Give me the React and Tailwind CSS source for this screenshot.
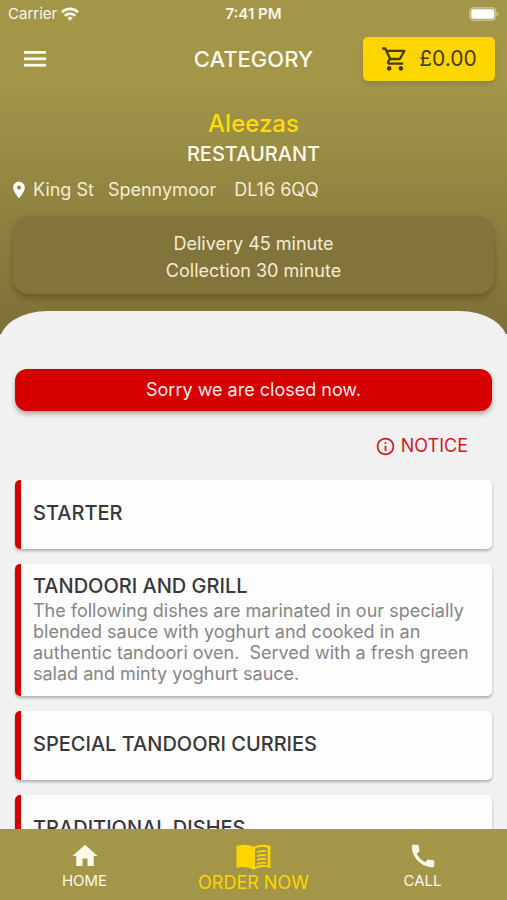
import React from "react";
import {
  MdOutlineShoppingCart,
  MdLocationOn,
  MdInfoOutline,
  MdHome,
  MdCall,
} from "react-icons/md";

const categories = [
  { name: "STARTER" },
  {
    name: "TANDOORI AND GRILL",
    description:
      "The following dishes are marinated in our specially blended sauce with yoghurt and cooked in an authentic tandoori oven.\u00a0 Served with a fresh green salad and minty yoghurt sauce.",
  },
  { name: "SPECIAL TANDOORI CURRIES" },
  { name: "TRADITIONAL DISHES" },
];

function WifiIcon() {
  return (
    <svg viewBox="0 0 18 14" className="h-[14px] w-[18px]" fill="none" stroke="currentColor" strokeWidth="2.700" aria-hidden="true">
      <path d="M1 5.200a11.400 11.400 0 0 1 16 0" />
      <path d="M3.800 8.800a7.400 7.400 0 0 1 10.400 0" />
      <path d="M9 13.800 6.200 11a4 4 0 0 1 5.600 0Z" fill="currentColor" stroke="none" />
    </svg>
  );
}

function BatteryIcon() {
  return (
    <svg viewBox="0 0 30 14" className="h-[14px] w-[30px]" aria-hidden="true">
      <rect x="0.8" y="0.8" width="26" height="12.4" rx="3.6" fill="none" stroke="#fff" strokeOpacity="0.5" strokeWidth="1.2" />
      <rect x="2.2" y="2.2" width="23.2" height="9.6" rx="2.2" fill="#fff" />
      <path d="M28 5v4c1.8-.6 1.8-3.400 0-4Z" fill="#fff" fillOpacity="0.5" />
    </svg>
  );
}

function MenuIcon() {
  return (
    <svg viewBox="0 0 22 16" className="h-4 w-[22px]" fill="currentColor" aria-hidden="true">
      <rect width="22" height="2.800" />
      <rect y="6.400" width="22" height="2.800" />
      <rect y="12.800" width="22" height="2.800" />
    </svg>
  );
}

function MenuBookIcon() {
  return (
    <svg viewBox="0 0 35 28" preserveAspectRatio="none" className="h-[27px] w-[35px]" aria-hidden="true">
      <path d="M17.500 3.200C13.500 0 5 0 .5 2.200v23c5-2 12-2 17 1.800 5-3.800 12-3.800 17-1.800v-23C30 0 21.500 0 17.500 3.200Z" fill="#fdd500" />
      <path d="M19 5.200c3.400-2.200 8.600-2.600 12.600-1.400v18.600c-4-1-9-.6-12.600 1.400Z" fill="#a39649" />
      <g stroke="#fdd500" strokeWidth="2" fill="none">
        <path d="M21 8.800c2.800-1.400 6-1.800 9-1.100" />
        <path d="M21 12.800c2.800-1.400 6-1.800 9-1.100" />
        <path d="M21 16.800c2.800-1.400 6-1.800 9-1.100" />
        <path d="M21 20.800c2.800-1.400 6-1.800 9-1.100" />
      </g>
    </svg>
  );
}

function StatusBar() {
  return (
    <div className="grid h-7 grid-cols-3 items-center px-2 text-[15px] text-[#faf6e8]">
      <div className="flex items-center gap-1">
        <span>Carrier</span>
        <WifiIcon />
      </div>
      <span className="text-center font-semibold">7:41 PM</span>
      <div className="flex justify-end">
        <BatteryIcon />
      </div>
    </div>
  );
}

function Header() {
  return (
    <header className="bg-linear-to-b from-[#a39649] from-25% to-[#7c7038] pb-10">
      <StatusBar />
      <div className="grid grid-cols-3 items-center px-3 pt-[9px]">
        <button type="button" aria-label="Open menu" className="w-fit p-3 text-[#fdf9ea]">
          <MenuIcon />
        </button>
        <h1 className="text-center text-[22px] leading-8 font-medium text-[#fdf9ea]">CATEGORY</h1>
        <button
          type="button"
          aria-label="Basket, £0.00"
          className="flex h-11 w-[132px] items-center justify-center gap-[10px] justify-self-end rounded-[5px] bg-[#fdd500] text-[21px] text-[#453b14] shadow-md"
        >
          <MdOutlineShoppingCart className="text-[28px]" />
          <span>£0.00</span>
        </button>
      </div>
      <div className="mt-[25px] text-center">
        <p className="text-2xl leading-9 font-medium text-[#fddc0b]">Aleezas</p>
        <p className="text-xl leading-6 font-medium text-[#fdf9ea]">RESTAURANT</p>
      </div>
      <address className="mt-3 flex h-6 items-center px-[9px] text-lg text-[#f5ecd3] not-italic">
        <MdLocationOn className="mr-1 text-xl text-white" />
        <span className="mr-[14px]">King St</span>
        <span className="mr-[18px]">Spennymoor</span>
        <span>DL16 6QQ</span>
      </address>
      <div className="mx-[13px] mt-[14px] rounded-2xl bg-[#82753b] pt-[14px] pb-[10px] text-center text-lg leading-[27px] text-[#f5ecd3] shadow-[0_4px_6px_rgba(60,50,10,0.35)]">
        <p>Delivery 45 minute</p>
        <p>Collection 30 minute</p>
      </div>
    </header>
  );
}

function CategoryCard({ name, description }) {
  return (
    <li className="overflow-hidden rounded-[5px] bg-[#fdfdfd] shadow-[0_2px_3px_rgba(0,0,0,0.28)]">
      <button
        type="button"
        className={
          description
            ? "block w-full border-l-[6px] border-[#d60000] px-3 pt-2 pb-3 text-left"
            : "block w-full border-l-[6px] border-[#d60000] px-3 pt-[19px] pb-[22px] text-left"
        }
      >
        <span className="block text-xl leading-7 font-medium text-[#383838]">{name}</span>
        {description && (
          <span className="block text-lg leading-[21px] text-[#858585]">{description}</span>
        )}
      </button>
    </li>
  );
}

function BottomNav() {
  return (
    <nav className="grid h-[71px] shrink-0 grid-cols-3 bg-[#a39649] text-center text-[#fdf9ea]">
      <a href="#home" className="flex flex-col items-center pt-3">
        <MdHome className="text-[30px]" />
        <span className="text-[15px] leading-5">HOME</span>
      </a>
      <a href="#order" aria-current="page" className="flex flex-col items-center pt-[15px] text-[#fdd500]">
        <MenuBookIcon />
        <span className="text-lg leading-6">ORDER NOW</span>
      </a>
      <a href="#call" className="flex flex-col items-center pt-3">
        <MdCall className="text-[30px]" />
        <span className="text-[15px] leading-5">CALL</span>
      </a>
    </nav>
  );
}

export default function App() {
  return (
    <div className="flex h-screen flex-col bg-[#f1f1f1] font-['Inter',sans-serif]">
      <div className="min-h-0 flex-1 overflow-y-auto [scrollbar-width:none]">
        <Header />
        <main className="-mt-[23px] rounded-t-[48px_30px] bg-[#f1f1f1] px-[15px] pt-[58px] pb-4">
          <p role="status" className="rounded-xl bg-[#d60000] pt-[7px] pb-2 text-center text-lg leading-[27px] text-[#fdeaea] shadow-[0_3px_5px_rgba(0,0,0,0.3)]">
            Sorry we are closed now.
          </p>
          <div className="flex justify-end pt-[23px] pb-[22px] pr-6">
            <button type="button" className="flex items-center gap-[5px] text-lg leading-6 text-[#d01c1c]">
              <MdInfoOutline className="text-[21px]" />
              NOTICE
            </button>
          </div>
          <ul className="flex flex-col gap-[15px]">
            {categories.map((category) => (
              <CategoryCard key={category.name} {...category} />
            ))}
          </ul>
        </main>
      </div>
      <BottomNav />
    </div>
  );
}
